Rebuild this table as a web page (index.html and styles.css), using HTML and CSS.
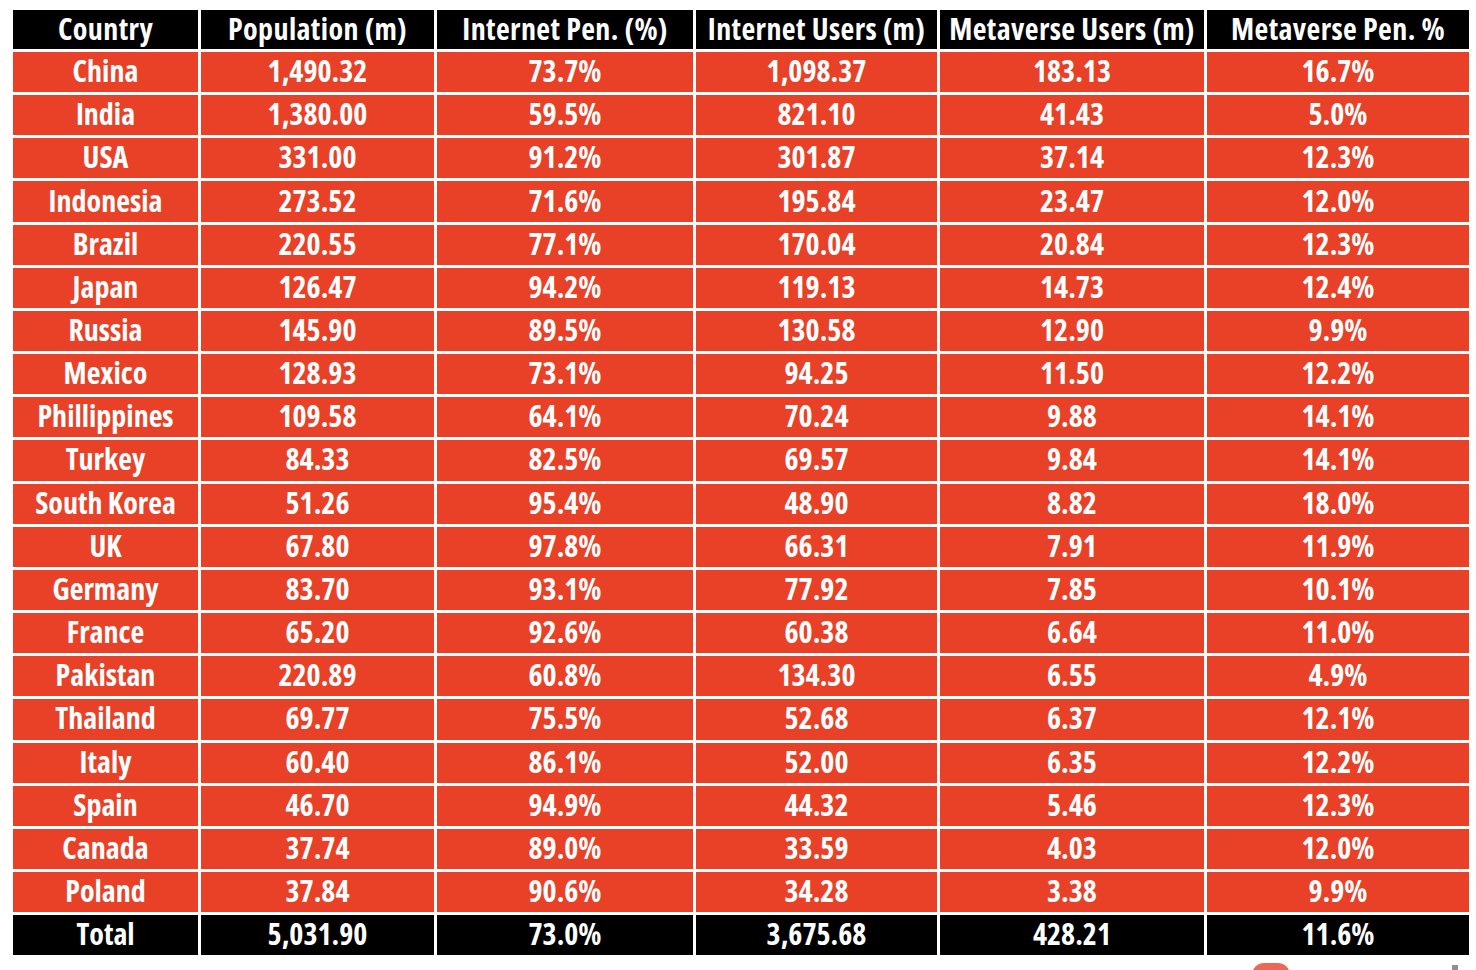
FILE: index.html
```html
<!DOCTYPE html>
<html lang="en">
<head>
<meta charset="utf-8">
<title>Metaverse Users by Country</title>
<link rel="stylesheet" href="styles.css">
</head>
<body>
<div class="table">
  <div class="cell head"><span>Country</span></div>
  <div class="cell head"><span>Population (m)</span></div>
  <div class="cell head"><span>Internet Pen. (%)</span></div>
  <div class="cell head"><span>Internet Users (m)</span></div>
  <div class="cell head"><span>Metaverse Users (m)</span></div>
  <div class="cell head"><span>Metaverse Pen. %</span></div>

  <div class="cell"><span>China</span></div><div class="cell"><span>1,490.32</span></div><div class="cell"><span>73.7%</span></div><div class="cell"><span>1,098.37</span></div><div class="cell"><span>183.13</span></div><div class="cell"><span>16.7%</span></div>
  <div class="cell"><span>India</span></div><div class="cell"><span>1,380.00</span></div><div class="cell"><span>59.5%</span></div><div class="cell"><span>821.10</span></div><div class="cell"><span>41.43</span></div><div class="cell"><span>5.0%</span></div>
  <div class="cell"><span>USA</span></div><div class="cell"><span>331.00</span></div><div class="cell"><span>91.2%</span></div><div class="cell"><span>301.87</span></div><div class="cell"><span>37.14</span></div><div class="cell"><span>12.3%</span></div>
  <div class="cell"><span>Indonesia</span></div><div class="cell"><span>273.52</span></div><div class="cell"><span>71.6%</span></div><div class="cell"><span>195.84</span></div><div class="cell"><span>23.47</span></div><div class="cell"><span>12.0%</span></div>
  <div class="cell"><span>Brazil</span></div><div class="cell"><span>220.55</span></div><div class="cell"><span>77.1%</span></div><div class="cell"><span>170.04</span></div><div class="cell"><span>20.84</span></div><div class="cell"><span>12.3%</span></div>
  <div class="cell"><span>Japan</span></div><div class="cell"><span>126.47</span></div><div class="cell"><span>94.2%</span></div><div class="cell"><span>119.13</span></div><div class="cell"><span>14.73</span></div><div class="cell"><span>12.4%</span></div>
  <div class="cell"><span>Russia</span></div><div class="cell"><span>145.90</span></div><div class="cell"><span>89.5%</span></div><div class="cell"><span>130.58</span></div><div class="cell"><span>12.90</span></div><div class="cell"><span>9.9%</span></div>
  <div class="cell"><span>Mexico</span></div><div class="cell"><span>128.93</span></div><div class="cell"><span>73.1%</span></div><div class="cell"><span>94.25</span></div><div class="cell"><span>11.50</span></div><div class="cell"><span>12.2%</span></div>
  <div class="cell"><span>Phillippines</span></div><div class="cell"><span>109.58</span></div><div class="cell"><span>64.1%</span></div><div class="cell"><span>70.24</span></div><div class="cell"><span>9.88</span></div><div class="cell"><span>14.1%</span></div>
  <div class="cell"><span>Turkey</span></div><div class="cell"><span>84.33</span></div><div class="cell"><span>82.5%</span></div><div class="cell"><span>69.57</span></div><div class="cell"><span>9.84</span></div><div class="cell"><span>14.1%</span></div>
  <div class="cell"><span>South Korea</span></div><div class="cell"><span>51.26</span></div><div class="cell"><span>95.4%</span></div><div class="cell"><span>48.90</span></div><div class="cell"><span>8.82</span></div><div class="cell"><span>18.0%</span></div>
  <div class="cell"><span>UK</span></div><div class="cell"><span>67.80</span></div><div class="cell"><span>97.8%</span></div><div class="cell"><span>66.31</span></div><div class="cell"><span>7.91</span></div><div class="cell"><span>11.9%</span></div>
  <div class="cell"><span>Germany</span></div><div class="cell"><span>83.70</span></div><div class="cell"><span>93.1%</span></div><div class="cell"><span>77.92</span></div><div class="cell"><span>7.85</span></div><div class="cell"><span>10.1%</span></div>
  <div class="cell"><span>France</span></div><div class="cell"><span>65.20</span></div><div class="cell"><span>92.6%</span></div><div class="cell"><span>60.38</span></div><div class="cell"><span>6.64</span></div><div class="cell"><span>11.0%</span></div>
  <div class="cell"><span>Pakistan</span></div><div class="cell"><span>220.89</span></div><div class="cell"><span>60.8%</span></div><div class="cell"><span>134.30</span></div><div class="cell"><span>6.55</span></div><div class="cell"><span>4.9%</span></div>
  <div class="cell"><span>Thailand</span></div><div class="cell"><span>69.77</span></div><div class="cell"><span>75.5%</span></div><div class="cell"><span>52.68</span></div><div class="cell"><span>6.37</span></div><div class="cell"><span>12.1%</span></div>
  <div class="cell"><span>Italy</span></div><div class="cell"><span>60.40</span></div><div class="cell"><span>86.1%</span></div><div class="cell"><span>52.00</span></div><div class="cell"><span>6.35</span></div><div class="cell"><span>12.2%</span></div>
  <div class="cell"><span>Spain</span></div><div class="cell"><span>46.70</span></div><div class="cell"><span>94.9%</span></div><div class="cell"><span>44.32</span></div><div class="cell"><span>5.46</span></div><div class="cell"><span>12.3%</span></div>
  <div class="cell"><span>Canada</span></div><div class="cell"><span>37.74</span></div><div class="cell"><span>89.0%</span></div><div class="cell"><span>33.59</span></div><div class="cell"><span>4.03</span></div><div class="cell"><span>12.0%</span></div>
  <div class="cell"><span>Poland</span></div><div class="cell"><span>37.84</span></div><div class="cell"><span>90.6%</span></div><div class="cell"><span>34.28</span></div><div class="cell"><span>3.38</span></div><div class="cell"><span>9.9%</span></div>

  <div class="cell total"><span>Total</span></div><div class="cell total"><span>5,031.90</span></div><div class="cell total"><span>73.0%</span></div><div class="cell total"><span>3,675.68</span></div><div class="cell total"><span>428.21</span></div><div class="cell total"><span>11.6%</span></div>
</div>
<div class="footer">
  <div class="logo-mark"></div>
  <div class="logo-dot"></div>
</div>
</body>
</html>
```
FILE: styles.css
```css
html, body {
  margin: 0;
  padding: 0;
  background: #ffffff;
}

body {
  width: 1476px;
  height: 970px;
  overflow: hidden;
}

.table {
  margin: 10px 0 0 13px;
  display: grid;
  grid-template-columns: 185px 233px 256px 241px 264px 262px;
  grid-template-rows: 39px;
  grid-auto-rows: 40.16px;
  gap: 3px;
  width: 1456px;
}

.cell {
  background: #e84127;
  color: #ffffff;
  display: flex;
  align-items: center;
  justify-content: center;
  font-family: "Open Sans", "Noto Sans", "Liberation Sans", sans-serif;
  font-weight: 750;
  font-stretch: 79%;
  font-size: 30px;
  line-height: 1;
  letter-spacing: 0;
  white-space: nowrap;
}

.cell span {
  display: inline-block;
  position: relative;
  top: -1px;
}

.head,
.total {
  background: #000000;
}

.head {
  letter-spacing: 0.4px;
}

.footer {
  position: relative;
  height: 20px;
}

.logo-mark {
  position: absolute;
  left: 1252px;
  top: 8px;
  width: 38px;
  height: 12px;
  border-radius: 12px 12px 0 0;
  background: #e84127;
  opacity: 0.8;
}

.logo-dot {
  position: absolute;
  left: 1452px;
  top: 10px;
  width: 6px;
  height: 10px;
  background: #444444;
  opacity: 0.6;
}
```
